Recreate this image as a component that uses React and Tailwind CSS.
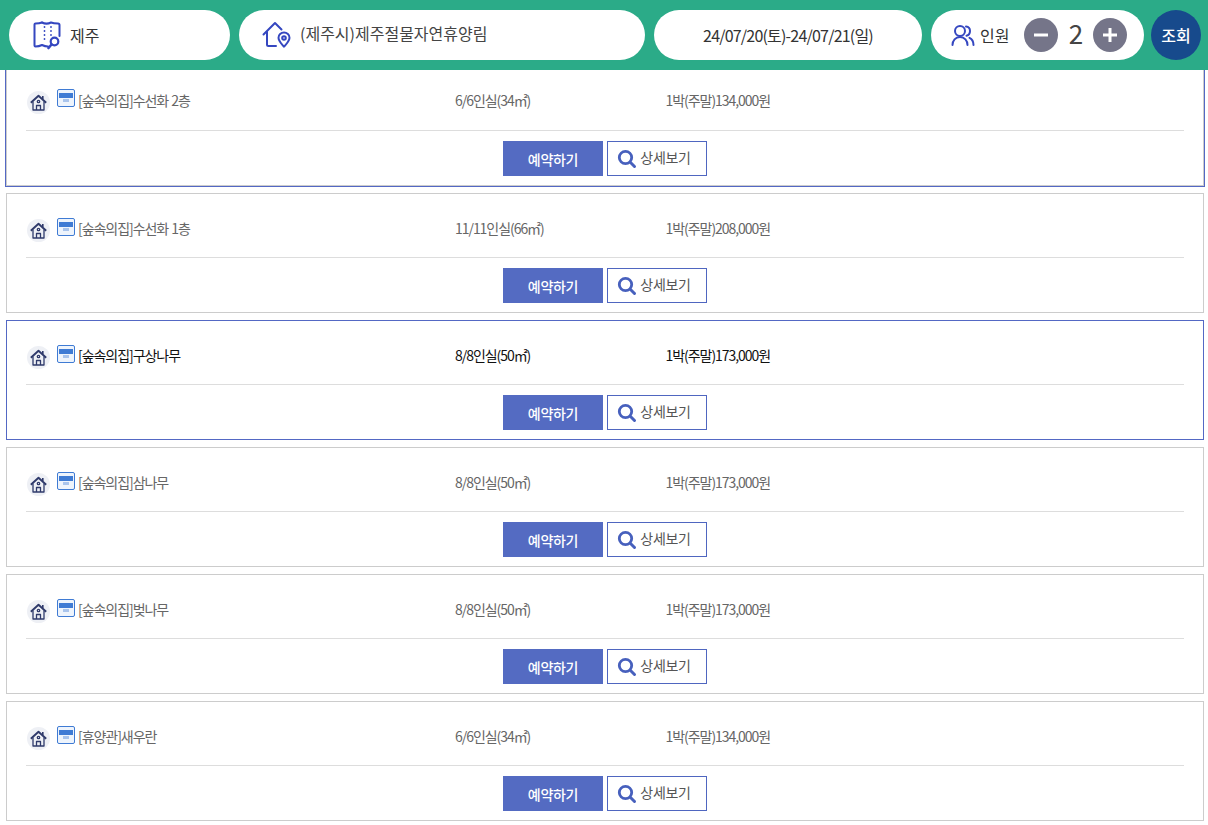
import React from 'react';

const rooms = [
  { name: '[숲속의집]수선화 2층', size: '6/6인실(34㎡)', price: '1박(주말)134,000원', outlined: true },
  { name: '[숲속의집]수선화 1층', size: '11/11인실(66㎡)', price: '1박(주말)208,000원' },
  { name: '[숲속의집]구상나무', size: '8/8인실(50㎡)', price: '1박(주말)173,000원', active: true },
  { name: '[숲속의집]삼나무', size: '8/8인실(50㎡)', price: '1박(주말)173,000원' },
  { name: '[숲속의집]벚나무', size: '8/8인실(50㎡)', price: '1박(주말)173,000원' },
  { name: '[휴양관]새우란', size: '6/6인실(34㎡)', price: '1박(주말)134,000원' }
];

const MapIcon = () => (
  <svg width="30" height="30" viewBox="0 0 30 30" fill="none" stroke="#3547c0" strokeWidth="2" strokeLinecap="round" strokeLinejoin="round">
    <path d="M9 2.500C6.500 3.500 4 3.500 2.500 3.500c-.7 0-1 .5-1 1v21c0 .7.500 1 1 1 2.500 0 4.500-.5 6.500-1.500 2 1 4 1.500 6 1.500" />
    <path d="M9 2.500c3 1.500 6 1.500 9 0 2.500 1 5 1 7 1 .8 0 1.500.5 1.500 1.500v11" />
    <path d="M11.500 7v.1M11.500 11v.1M11.500 15v.1M11.500 19v.1M18 7v.1M18 11v.1M18 15v.1" strokeWidth="1.800" />
    <circle cx="21.500" cy="21.500" r="3.800" strokeWidth="2.200" />
    <path d="M18.500 24.500l-3 3.500" strokeWidth="2.600" />
  </svg>
);

const HousePinIcon = () => (
  <svg width="30" height="30" viewBox="0 0 30 30" fill="none" stroke="#3547c0" strokeWidth="2" strokeLinecap="round" strokeLinejoin="round">
    <path d="M1.500 14.500L13 3l6.500 6.500" />
    <path d="M5 12v12.500c0 1 .5 1.500 1.500 1.500H14" />
    <path d="M22 12.500c3 0 5.500 2.300 5.500 5.200 0 3.500-3.500 6.500-5.500 9-2-2.500-5.500-5.500-5.500-9 0-2.900 2.500-5.200 5.500-5.200z" />
    <circle cx="22" cy="18" r="1.800" />
  </svg>
);

const UsersIcon = () => (
  <svg width="24" height="24" viewBox="0 0 24 24" fill="none" stroke="#3547c0" strokeWidth="2" strokeLinecap="round" strokeLinejoin="round">
    <circle cx="9" cy="8" r="5" />
    <path d="M1.500 22c0-4.500 3-8 7.500-8s7.500 3.500 7.500 8" />
    <path d="M15 3.500c2.500.3 4 2.200 4 4.500s-1.500 4.200-3.500 4.800" />
    <path d="M18.500 14.800c2.500 1.200 4 3.800 4 7.200" />
  </svg>
);

const HomeBadge = () => (
  <span className="w-[23px] h-[23px] rounded-full bg-[#eef0f5] flex items-center justify-center mt-[4px] ml-[1px]">
    <svg width="17" height="17" viewBox="0 0 17 17" fill="none" stroke="#2f3a6b" strokeWidth="1.300" strokeLinejoin="round">
      <path d="M.8 8.800L8.500 1.800 16.200 8.800" strokeWidth="1.900" />
      <path d="M3 7.500V16h11V7.500" />
      <path d="M6.500 16v-4.500h4V16" />
      <circle cx="8.500" cy="7.500" r="1.200" />
      <path d="M12.800 2v3" strokeWidth="1.600" />
    </svg>
  </span>
);

const AirconBadge = () => (
  <span className="w-[18px] h-[18px] rounded-[2px] border border-[#3f7bd4] bg-[#eef4fc] flex flex-col items-center pt-[3px] ml-[7px] -mt-[4px]">
    <span className="w-[14px] h-[5px] bg-[#3f7bd4]" />
    <span className="w-[6px] h-[3px] mt-[1px] bg-[#a9c4ec]" />
  </span>
);

const SearchIcon = () => (
  <svg width="20" height="20" viewBox="0 0 20 20" fill="none" stroke="#4760bd" strokeLinecap="round">
    <circle cx="8.500" cy="8.500" r="6.200" strokeWidth="2.800" />
    <path d="M13.500 13.500L17.500 17.500" strokeWidth="3" />
  </svg>
);

const RoomCard = ({ room }) => (
  <div
    className={`h-[120px] mt-[7px] border bg-white px-[19px] ${
      room.active ? 'border-[#5468c4]' : 'border-[#cccccc]'
    } ${room.outlined ? 'outline outline-[#5468c4]' : ''}`}
  >
    <div className={`h-[63px] flex items-center text-[14px] tracking-[-1.05px] ${room.outlined ? 'pt-[3px]' : 'pt-[6px]'} ${room.active ? 'text-[#111111]' : 'text-[#666666]'}`}>
      <div className="w-[429px] flex items-center">
        <HomeBadge />
        <AirconBadge />
        <span className="ml-[3px] [word-spacing:1px]">{room.name}</span>
      </div>
      <div className="w-[210.5px]">{room.size}</div>
      <div>{room.price}</div>
    </div>
    <div className="h-px bg-[#dddddd]" />
    <div className="flex justify-center gap-[4px] mt-[10px]">
      <button className="w-[100px] h-[35px] bg-[#546bc2] text-white text-[14px] font-medium pt-[2px] tracking-[-0.3px]">예약하기</button>
      <button className="w-[100px] h-[35px] border border-[#4f66c0] bg-white text-[#555555] text-[14px] flex items-center justify-center gap-[3px] pr-[6px]">
        <SearchIcon />
        <span className="tracking-[-0.3px] -mt-[2px]">상세보기</span>
      </button>
    </div>
  </div>
);

const App = () => {
  return (
    <div className="min-h-screen bg-white font-['Noto_Sans_CJK_KR','Noto_Sans',sans-serif]">
      {/* Search bar */}
      <div className="relative z-10 h-[70px] -mb-[11px] bg-[#2bab88] flex items-center pl-[9px] pr-[7px]">
        <div className="w-[221px] h-[50px] rounded-full bg-white flex items-center pl-[24px]">
          <MapIcon />
          <span className="ml-[7px] text-[16px] text-[#333333]">제주</span>
        </div>
        <div className="w-[406px] h-[50px] ml-[9px] rounded-full bg-white flex items-center pl-[23px]">
          <HousePinIcon />
          <span className="ml-[8px] text-[16px] text-[#444444] -mt-[4px]">(제주시)제주절물자연휴양림</span>
        </div>
        <div className="w-[268px] h-[50px] ml-[9px] rounded-full bg-white flex items-center justify-center text-[16px] tracking-[-0.8px] text-[#333333]">
          24/07/20(토)-24/07/21(일)
        </div>
        <div className="w-[213px] h-[50px] ml-[9px] rounded-full bg-white flex items-center pl-[20px]">
          <UsersIcon />
          <span className="ml-[5px] text-[16px] text-[#333333]">인원</span>
          <span className="ml-[15px] w-[34px] h-[34px] rounded-full bg-[#757589] flex items-center justify-center">
            <svg width="16" height="16" viewBox="0 0 16 16" fill="none" stroke="white" strokeWidth="3"><path d="M1 8h14" /></svg>
          </span>
          <span className="w-[35px] text-center text-[26px] text-[#444444] -mt-[5px]">2</span>
          <span className="w-[34px] h-[34px] rounded-full bg-[#757589] flex items-center justify-center">
            <svg width="16" height="16" viewBox="0 0 16 16" fill="none" stroke="white" strokeWidth="3"><path d="M1 8h14M8 1v14" /></svg>
          </span>
        </div>
        <button className="w-[50px] h-[50px] ml-[7px] rounded-full bg-[#174a8c] text-white text-[16px] font-medium">조회</button>
      </div>

      {/* Room list */}
      <div className="pl-[6px] pr-[4px]">
        {rooms.map((room) => (
          <RoomCard key={room.name} room={room} />
        ))}
      </div>
    </div>
  );
};

export default App;
